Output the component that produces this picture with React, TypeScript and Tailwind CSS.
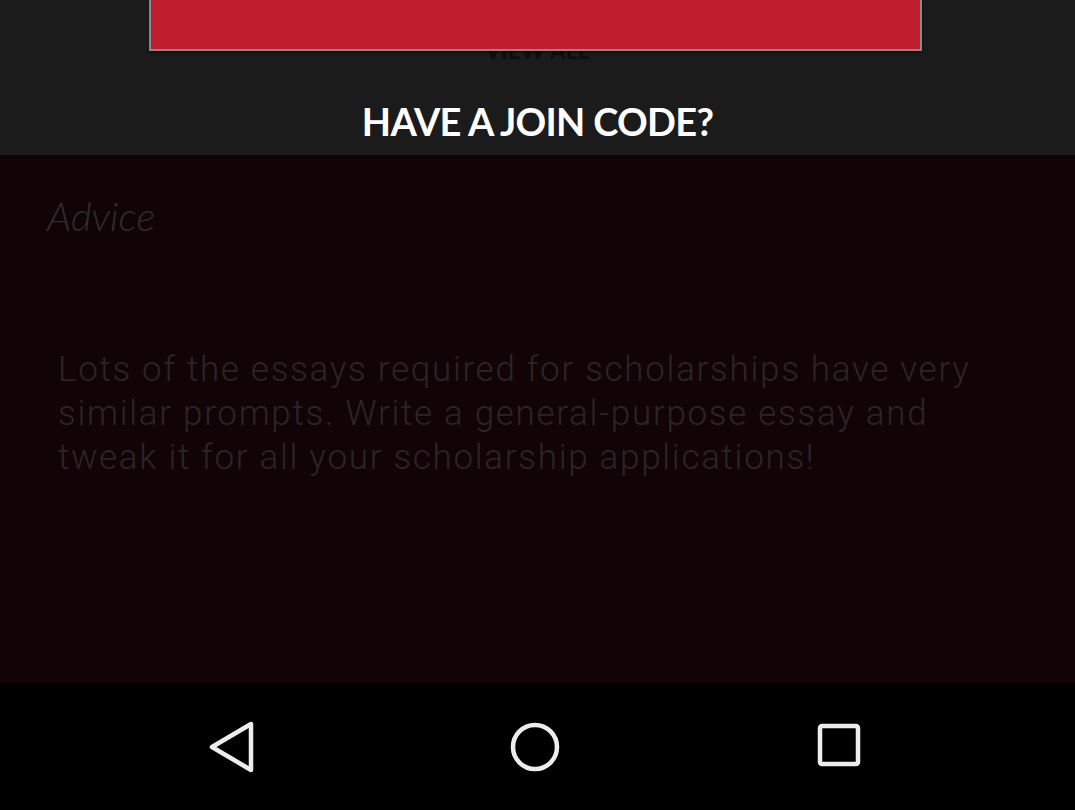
import React from "react";

const NavBack = () => (
  <svg width="52" height="52" viewBox="0 0 52 52" fill="none">
    <path
      d="M45 3 L45 49 L6 26 Z"
      stroke="#ededed"
      strokeWidth="4.5"
      strokeLinejoin="round"
    />
  </svg>
);

const NavHome = () => (
  <svg width="52" height="52" viewBox="0 0 52 52" fill="none">
    <circle cx="26" cy="26" r="22" stroke="#ededed" strokeWidth="4.5" />
  </svg>
);

const NavRecent = () => (
  <svg width="52" height="52" viewBox="0 0 52 52" fill="none">
    <rect x="7" y="5" width="38" height="38" rx="2" stroke="#ededed" strokeWidth="4.5" />
  </svg>
);

const App = () => {
  return (
    <div className="w-full h-[810px] flex flex-col overflow-hidden bg-black">
      {/* join code header */}
      <div className="relative h-[155px] shrink-0 bg-[#1b1b1b] flex flex-col items-center">
        <p className="pt-[40px] text-[22px] leading-[22px] font-bold tracking-wide text-[#0d0d0d] font-['Lato',sans-serif]">
          VIEW ALL
        </p>
        <div className="absolute top-0 left-[149px] w-[773px] h-[51px] bg-[#be1e2d] border-x-2 border-b-2 border-[#8a8a8a] shadow-[0_1px_2px_rgba(0,0,0,0.6)]" />
        <h2 className="mt-[39px] text-[38px] leading-[40px] font-bold text-white font-['Lato',sans-serif] tracking-[-0.7px]">
          HAVE A JOIN CODE?
        </h2>
      </div>

      {/* advice card */}
      <div className="flex-1 bg-[#110306] px-[47px]">
        <h3 className="pt-[33px] text-[40px] leading-[56px] italic font-light text-[#2d2f2f] font-['Lato',sans-serif]">
          Advice
        </h3>
        <p className="mt-[104px] pl-[11px] pr-[40px] text-[35px] leading-[44px] font-light tracking-[1.7px] text-[#2c2527] font-['Roboto',sans-serif]">
          Lots of the essays required for scholarships have very similar prompts. Write a general-purpose essay and tweak it for all your scholarship applications!
        </p>
      </div>

      {/* android nav bar */}
      <div className="h-[127px] shrink-0 bg-black flex items-center justify-center pr-[5px]">
        <div className="flex items-center w-[659px] justify-between">
          <NavBack />
          <NavHome />
          <NavRecent />
        </div>
      </div>
    </div>
  );
};

export default App;
